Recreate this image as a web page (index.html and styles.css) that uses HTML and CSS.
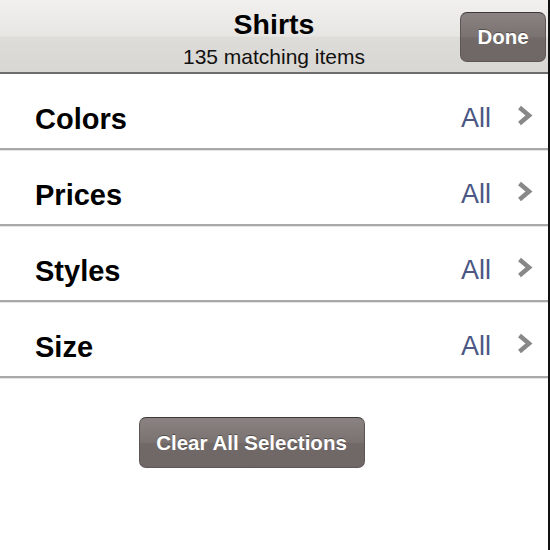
FILE: index.html
```html
<!DOCTYPE html>
<html lang="en">

<head>
    <meta charset="UTF-8">
    <meta name="viewport" content="width=device-width, initial-scale=1.0">
    <title>Shirts</title>
    <link rel="stylesheet" href="styles.css">
</head>

<body>
    <div class="screen">
        <header class="navbar">
            <div></div>
            <div class="title">
                <h1>Shirts</h1>
                <p>135 matching items</p>
            </div>
            <button class="btn done">Done</button>
        </header>
        <ul class="filters">
            <li class="filter">
                <span class="label">Colors</span>
                <span class="value">All</span>
                <svg class="chevron" width="17" height="21" viewBox="0 0 17 21"><path d="M3.5 2.5 L13 10.5 L3.5 18.5" fill="none" stroke="#888" stroke-width="4.5"/></svg>
            </li>
            <li class="filter">
                <span class="label">Prices</span>
                <span class="value">All</span>
                <svg class="chevron" width="17" height="21" viewBox="0 0 17 21"><path d="M3.5 2.5 L13 10.5 L3.5 18.5" fill="none" stroke="#888" stroke-width="4.5"/></svg>
            </li>
            <li class="filter">
                <span class="label">Styles</span>
                <span class="value">All</span>
                <svg class="chevron" width="17" height="21" viewBox="0 0 17 21"><path d="M3.5 2.5 L13 10.5 L3.5 18.5" fill="none" stroke="#888" stroke-width="4.5"/></svg>
            </li>
            <li class="filter">
                <span class="label">Size</span>
                <span class="value">All</span>
                <svg class="chevron" width="17" height="21" viewBox="0 0 17 21"><path d="M3.5 2.5 L13 10.5 L3.5 18.5" fill="none" stroke="#888" stroke-width="4.5"/></svg>
            </li>
        </ul>
        <div class="actions">
            <button class="btn clear">Clear All Selections</button>
        </div>
    </div>
</body>

</html>
```

FILE: styles.css
```css
body {
    font-family: 'Liberation Sans', Arial, sans-serif;
    background-color: #fff;
    margin: 0;
}

.screen {
    width: 548px;
    height: 550px;
    border-right: 2px solid #111;
    background-color: #fff;
}

.navbar {
    display: grid;
    grid-template-columns: 1fr auto 1fr;
    align-items: start;
    height: 72px;
    background: linear-gradient(#f1f0ee, #e8e6e3 50%, #dedcd8 52%, #d9d7d3);
    border-bottom: 2px solid #6e6c6a;
}

.title {
    text-align: center;
}

.title h1 {
    margin: 8px 0 0;
    font-size: 28.5px;
    line-height: 32px;
    color: #000;
}

.title p {
    margin: 6px 0 0;
    font-size: 21px;
    line-height: 22px;
    color: #111;
}

.btn {
    font-family: 'Liberation Sans', Arial, sans-serif;
    font-weight: bold;
    color: #fff;
    background: linear-gradient(#8a8381, #7a7270 50%, #716967 52%, #6f6765);
    border: 1px solid #5e5654;
    border-top-color: #3e3836;
    border-radius: 7px;
    text-shadow: 0 -1px 0 rgba(0, 0, 0, 0.35);
    cursor: pointer;
}

.done {
    justify-self: end;
    width: 86px;
    height: 50px;
    margin: 12px 2px 0 0;
    font-size: 20.5px;
    padding: 0;
}

.filters {
    list-style: none;
    margin: 0;
    padding: 0;
}

.filter {
    display: flex;
    align-items: center;
    height: 76px;
    padding: 0 15px 0 35px;
    box-sizing: border-box;
    border-bottom: 2px solid #a9a9a9;
    box-shadow: 0 1px 0 #e4e4e4;
}

.label {
    flex: 1;
    font-size: 29px;
    font-weight: bold;
    color: #000;
    padding-top: 17px;
}

.value {
    font-size: 27px;
    color: #4b5785;
    margin-right: 25px;
    padding-top: 15px;
}

.chevron {
    margin-top: 9px;
}

.actions {
    display: flex;
    justify-content: center;
    padding: 39px 45px 0 0;
}

.clear {
    width: 226px;
    height: 51px;
    font-size: 20.5px;
    padding: 0;
}
```
